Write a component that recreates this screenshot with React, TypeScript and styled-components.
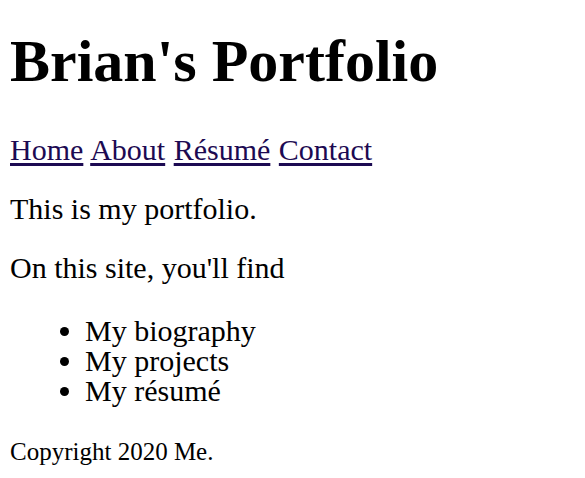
import React from "react";
import styled, { createGlobalStyle } from "styled-components";

const GlobalStyle = createGlobalStyle`
  html, body {
    margin: 0;
    padding: 0;
    background: #ffffff;
  }
  body {
    font-family: "Liberation Serif", "Times New Roman", serif;
    color: #000000;
  }
`;

const Page = styled.div`
  padding: 0 10px;
  font-size: 30px;
  line-height: 30px;
`;

const Title = styled.h1`
  margin: 28px 0 0;
  font-size: 60px;
  line-height: 66px;
  font-weight: bold;
`;

const Nav = styled.nav`
  margin-top: 41px;
  word-spacing: 1px;
`;

const NavLink = styled.a`
  color: #1c0a52;
  text-decoration: underline;
  text-underline-offset: 3px;
`;

const Para = styled.p`
  margin: 29px 0 0;
`;

const List = styled.ul`
  margin: 33px 0 0;
  padding-left: 75px;
  list-style: disc;
`;

const Footer = styled.footer`
  margin-top: 33px;
  font-size: 25px;
  line-height: 26px;
`;

const links = ["Home", "About", "Résumé", "Contact"];
const items = ["My biography", "My projects", "My résumé"];

const App: React.FC = () => {
  return (
    <>
      <GlobalStyle />
      <Page>
        <Title>Brian's Portfolio</Title>
        <Nav>
          {links.map((l, i) => (
            <React.Fragment key={l}>
              {i > 0 && " "}
              <NavLink href="#">{l}</NavLink>
            </React.Fragment>
          ))}
        </Nav>
        <Para>This is my portfolio.</Para>
        <Para>On this site, you'll find</Para>
        <List>
          {items.map((i) => (
            <li key={i}>{i}</li>
          ))}
        </List>
        <Footer>Copyright 2020 Me.</Footer>
      </Page>
    </>
  );
};

export default App;
